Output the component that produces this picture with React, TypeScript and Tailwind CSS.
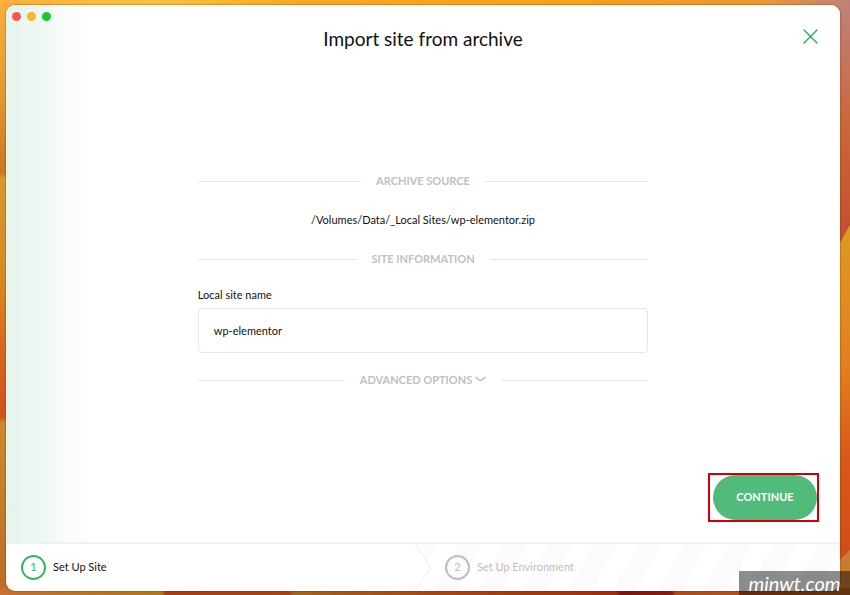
import type { ReactNode } from "react";

function Divider({ children }: { children: ReactNode }) {
  return (
    <div className="flex items-center gap-[15px] before:h-px before:flex-1 before:bg-[#e7e7e7] after:h-px after:flex-1 after:bg-[#e7e7e7]">
      {children}
    </div>
  );
}

function Wallpaper() {
  return (
    <svg className="absolute inset-0 h-full w-full" viewBox="0 0 850 595" preserveAspectRatio="none" aria-hidden="true">
      <defs>
        <linearGradient id="top" x1="0" x2="1" y1="0" y2="0">
          <stop offset="0" stopColor="#fbb03a" />
          <stop offset="0.18" stopColor="#fcc040" />
          <stop offset="0.35" stopColor="#f9a826" />
          <stop offset="0.65" stopColor="#fb9f1c" />
          <stop offset="0.9" stopColor="#ec9634" />
          <stop offset="1" stopColor="#c08078" />
        </linearGradient>
        <linearGradient id="left" gradientUnits="userSpaceOnUse" x1="0" x2="0" y1="0" y2="595">
          <stop offset="0" stopColor="#fbb03a" />
          <stop offset="0.15" stopColor="#e59a30" />
          <stop offset="0.29" stopColor="#cf7620" />
          <stop offset="0.3" stopColor="#d8982e" />
          <stop offset="0.46" stopColor="#da8a20" />
          <stop offset="0.6" stopColor="#d8641e" />
          <stop offset="0.7" stopColor="#d4501a" />
          <stop offset="0.71" stopColor="#cc8a2a" />
          <stop offset="1" stopColor="#bf6a28" />
        </linearGradient>
        <linearGradient id="rightUpper" x1="0" x2="0" y1="0" y2="1">
          <stop offset="0" stopColor="#c08078" />
          <stop offset="0.45" stopColor="#c9683c" />
          <stop offset="1" stopColor="#c44a2a" />
        </linearGradient>
        <linearGradient id="rightLower" x1="0" x2="0" y1="0" y2="1">
          <stop offset="0" stopColor="#dc9a22" />
          <stop offset="0.4" stopColor="#e2801f" />
          <stop offset="0.7" stopColor="#d8561a" />
          <stop offset="1" stopColor="#d04c18" />
        </linearGradient>
        <linearGradient id="bottom" x1="0" x2="1" y1="0" y2="0">
          <stop offset="0" stopColor="#c87030" />
          <stop offset="0.19" stopColor="#b07a1c" />
          <stop offset="0.195" stopColor="#a83c10" />
          <stop offset="0.34" stopColor="#a84412" />
          <stop offset="0.345" stopColor="#a8641c" />
          <stop offset="0.5" stopColor="#a84812" />
          <stop offset="0.725" stopColor="#a02c10" />
          <stop offset="0.73" stopColor="#7c1610" />
          <stop offset="0.79" stopColor="#8a1c10" />
          <stop offset="0.795" stopColor="#b04c18" />
          <stop offset="1" stopColor="#b45c20" />
        </linearGradient>
      </defs>
      <rect width="850" height="595" fill="url(#top)" />
      <rect y="5" width="12" height="590" fill="url(#left)" />
      <path d="M830 8h20v217l-20 36z" fill="url(#rightUpper)" />
      <path d="M850 225v325l-20 20V261z" fill="url(#rightLower)" />
      <path d="M850 550v45h-20v-25z" fill="#c97c34" />
      <rect y="588" width="850" height="7" fill="url(#bottom)" />
    </svg>
  );
}

function StepBackdrop() {
  return (
    <svg className="absolute inset-y-0 right-0 h-full w-[426px]" viewBox="0 0 426 47" preserveAspectRatio="none" aria-hidden="true">
      <defs>
        <pattern id="stripes" width="45" height="47" patternUnits="userSpaceOnUse" patternTransform="skewX(-29)">
          <rect width="23" height="47" fill="#fbfbfb" />
        </pattern>
      </defs>
      <path d="M1 0h425v47H1l16-23z" fill="url(#stripes)" />
      <path d="M1 0l16 24L1 47" fill="none" stroke="#ececec" strokeWidth="1" />
    </svg>
  );
}

export default function App() {
  return (
    <div className="relative flex h-screen flex-col overflow-hidden pt-[5px] pr-[10px] pb-1 pl-1.5 font-[Lato,sans-serif] text-[#111]">
      <Wallpaper />
      <div className="relative flex flex-1 flex-col overflow-hidden rounded-[9px] bg-white shadow-[0_0_2px_rgba(80,30,0,0.7)]">
        <main className="relative flex flex-1 flex-col bg-[linear-gradient(to_right,#e6f4ec,#edf7f1_32px,#f8fcfa_60px,#fff_84px)]">
          <div className="absolute top-[7px] left-1.5 flex gap-1.5">
            <span className="size-[9px] rounded-full bg-[#fb5552]" />
            <span className="size-[9px] rounded-full bg-[#fbb528]" />
            <span className="size-[9px] rounded-full bg-[#18c832]" />
          </div>
          <button type="button" aria-label="Close" className="absolute top-6 right-[22px]">
            <svg className="size-[15px]" viewBox="0 0 15 15" fill="none" stroke="#22ae55" strokeWidth="1.4" strokeLinecap="round" aria-hidden="true">
              <path d="M1 1l13 13M14 1L1 14" />
            </svg>
          </button>
          <h1 className="pt-[22px] text-center text-[19px] leading-6">Import site from archive</h1>
          <div className="mx-auto mt-[122px] w-[54%] text-[11px] leading-4">
            <Divider>
              <h2 className="font-bold text-[#c0c0c0]">ARCHIVE SOURCE</h2>
            </Divider>
            <p className="my-[23px] text-center">/Volumes/Data/_Local Sites/wp-elementor.zip</p>
            <Divider>
              <h2 className="font-bold text-[#c0c0c0]">SITE INFORMATION</h2>
            </Divider>
            <label htmlFor="site" className="mt-5 block">Local site name</label>
            <input id="site" defaultValue="wp-elementor" className="mt-[5px] mb-[19px] block h-[45px] w-full rounded-[4px] border border-[#e7e7e7] bg-white px-[15px] outline-none" />
            <Divider>
              <button type="button" className="flex items-center gap-[3px] font-bold text-[#c0c0c0]">
                ADVANCED OPTIONS
                <svg className="h-[8px] w-[11px]" viewBox="0 0 11 8" fill="none" stroke="#b5b5b5" strokeWidth="1.4" strokeLinecap="round" aria-hidden="true">
                  <path d="M1 1.500L4.500 4.200Q5.500 4.900 6.500 4.200L10 1.500" />
                </svg>
              </button>
            </Divider>
          </div>
          <div className="mt-auto mr-[21px] mb-5 self-end border-2 border-[#cc0008] pl-[3px]">
            <button type="button" className="block h-[45px] w-[104px] rounded-full bg-[#51bb7b] text-[11px] font-bold text-white">CONTINUE</button>
          </div>
        </main>
        <footer className="relative flex h-[49px] border-t-2 border-[#f0f0f0] text-[11px]">
          <StepBackdrop />
          <div className="relative flex w-1/2 items-center gap-[7px] pl-[15px]">
            <span className="flex size-[25px] items-center justify-center rounded-full border-2 border-[#35b566] text-[#35b566]">1</span>
            Set Up Site
          </div>
          <div className="relative flex flex-1 items-center gap-[7px] pl-[22px] text-[#bdbdbd]">
            <span className="flex size-[25px] items-center justify-center rounded-full border-2 border-[#bdbdbd]">2</span>
            Set Up Environment
          </div>
        </footer>
      </div>
      <div className="absolute right-0 bottom-0 h-6 w-[111px] bg-black/45 text-center text-[20px] leading-6 text-white italic">minwt.com</div>
    </div>
  );
}
